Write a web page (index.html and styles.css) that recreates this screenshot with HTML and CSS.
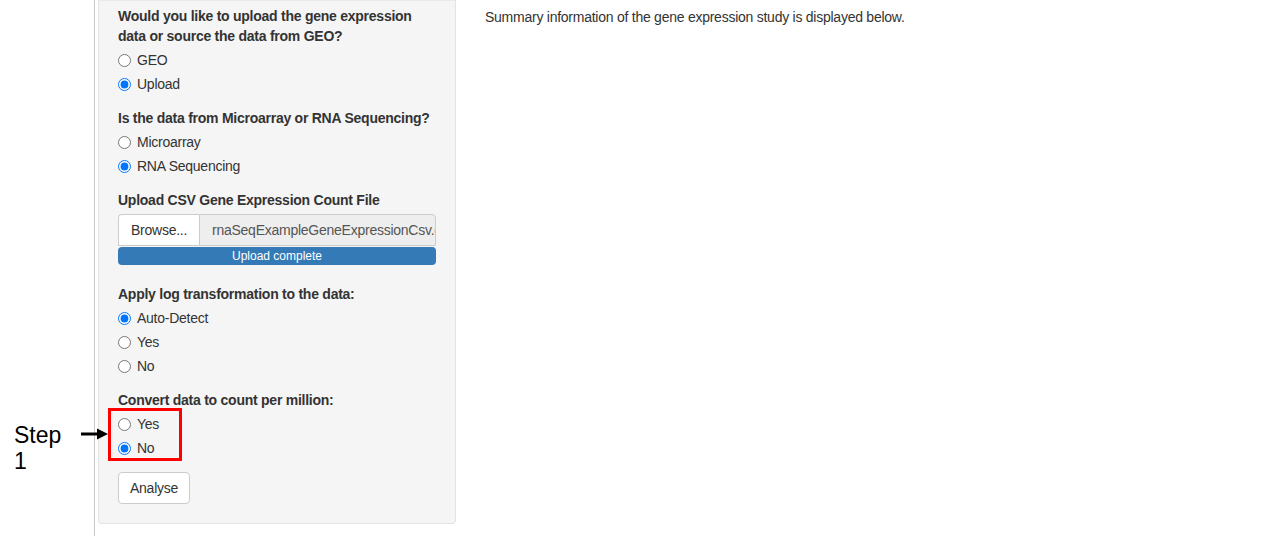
FILE: index.html
```html
<!DOCTYPE html>
<html>
<head>
<meta charset="utf-8">
<link rel="stylesheet" href="styles.css">
</head>
<body>
<div class="page">
  <div class="gutter"></div>
  <div class="sidebar">
    <div class="well">
      <div class="group">
        <label class="lbl">Would you like to upload the gene expression data or source the data from GEO?</label>
        <div class="options">
          <label class="radio"><input type="radio" name="src">GEO</label>
          <label class="radio"><input type="radio" name="src" checked>Upload</label>
        </div>
      </div>
      <div class="group">
        <label class="lbl">Is the data from Microarray or RNA Sequencing?</label>
        <div class="options">
          <label class="radio"><input type="radio" name="tech">Microarray</label>
          <label class="radio"><input type="radio" name="tech" checked>RNA Sequencing</label>
        </div>
      </div>
      <div class="group file-group">
        <label class="lbl">Upload CSV Gene Expression Count File</label>
        <div class="file-row">
          <span class="browse">Browse...</span>
          <span class="filename">rnaSeqExampleGeneExpressionCsv.csv</span>
        </div>
        <div class="progress">Upload complete</div>
      </div>
      <div class="group">
        <label class="lbl">Apply log transformation to the data:</label>
        <div class="options">
          <label class="radio"><input type="radio" name="log" checked>Auto-Detect</label>
          <label class="radio"><input type="radio" name="log">Yes</label>
          <label class="radio"><input type="radio" name="log">No</label>
        </div>
      </div>
      <div class="group">
        <label class="lbl">Convert data to count per million:</label>
        <div class="options">
          <label class="radio"><input type="radio" name="cpm">Yes</label>
          <label class="radio"><input type="radio" name="cpm" checked>No</label>
        </div>
      </div>
      <button class="btn">Analyse</button>
    </div>
  </div>
  <div class="main">
    <p class="summary">Summary information of the gene expression study is displayed below.</p>
  </div>
</div>
<div class="step">Step<br>1</div>
<svg class="arrow" width="28" height="12" viewBox="0 0 28 12">
  <line x1="0" y1="6" x2="18" y2="6" stroke="#000" stroke-width="3"/>
  <polygon points="16,0.5 27,6 16,11.5" fill="#000"/>
</svg>
<div class="highlight"></div>
</body>
</html>
```
FILE: styles.css
```css
* { box-sizing: border-box; }
html, body { margin: 0; padding: 0; background: #fff; }
body {
  font-family: "Liberation Sans", Arial, Helvetica, sans-serif;
  font-size: 14px;
  line-height: 20px;
  letter-spacing: -0.25px;
  color: #333;
  height: 536px;
  overflow: hidden;
}
.page {
  display: flex;
  align-items: flex-start;
  height: 536px;
}
.gutter {
  width: 95px;
  height: 536px;
  border-right: 1px solid #c8c8c8;
  flex: none;
}
.sidebar {
  padding-left: 3px;
  flex: none;
}
.well {
  width: 358px;
  background: #f5f5f5;
  border: 1px solid #e3e3e3;
  border-top: none;
  border-radius: 0 0 4px 4px;
  box-shadow: inset 0 1px 1px rgba(0,0,0,0.05);
  padding: 6px 19px 19px 19px;
}
.group { margin-bottom: 14px; }
.lbl {
  display: block;
  font-weight: bold;
  margin-bottom: 4px;
}
.options {
  display: flex;
  flex-direction: column;
  gap: 4px;
}
.radio {
  display: flex;
  align-items: center;
  height: 20px;
  cursor: pointer;
}
.radio input {
  margin: 0 6px 0 0;
  width: 13px;
  height: 13px;
}
.file-group { margin-bottom: 19px; }
.file-row {
  display: flex;
  height: 32px;
}
.browse {
  flex: none;
  width: 81px;
  background: #fff;
  border: 1px solid #ccc;
  border-right: none;
  border-radius: 4px 0 0 0;
  padding: 0 12px;
  line-height: 30px;
  color: #333;
}
.filename {
  flex: 1;
  min-width: 0;
  background: #eee;
  border: 1px solid #ccc;
  border-radius: 0 4px 0 0;
  padding: 0 10px 0 12px;
  line-height: 30px;
  color: #555;
  white-space: nowrap;
  overflow: hidden;
  text-overflow: clip;
}
.progress {
  margin-top: 1px;
  height: 18px;
  background: #337ab7;
  border-radius: 4px;
  color: #fff;
  font-size: 12px;
  line-height: 18px;
  letter-spacing: 0;
  text-align: center;
}
.btn {
  display: block;
  height: 32px;
  width: 72px;
  background: #fff;
  border: 1px solid #ccc;
  border-radius: 4px;
  font-family: inherit;
  font-size: 14px;
  letter-spacing: -0.25px;
  color: #333;
  padding: 0;
}
.main {
  padding-left: 29px;
  flex: 1;
}
.summary {
  margin: 7px 0 0 0;
}
.step {
  position: absolute;
  left: 14px;
  top: 422px;
  font-size: 23px;
  line-height: 26px;
  letter-spacing: 0;
  color: #000;
}
.arrow {
  position: absolute;
  left: 81px;
  top: 428px;
}
.highlight {
  position: absolute;
  left: 108px;
  top: 408px;
  width: 74px;
  height: 53px;
  border: 3px solid #f00;
}
```
